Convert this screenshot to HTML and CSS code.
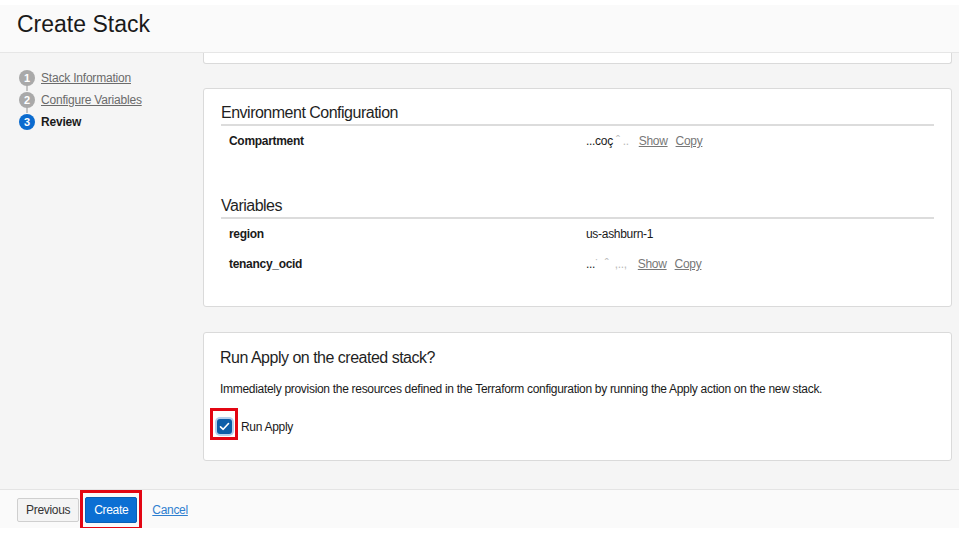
FILE: index.html
```html
<!DOCTYPE html>
<html>
<head>
<meta charset="utf-8">
<link rel="stylesheet" href="styles.css">
</head>
<body>
<div class="app">
  <header class="header"><h1 class="page-title">Create Stack</h1></header>
  <div class="body">
    <nav class="sidebar">
      <ol class="steps">
        <li class="step done"><span class="num">1</span><a class="step-link" href="#">Stack Information</a></li>
        <li class="step done"><span class="num">2</span><a class="step-link" href="#">Configure Variables</a></li>
        <li class="step current"><span class="num">3</span><span class="step-label">Review</span></li>
      </ol>
    </nav>
    <main class="main">
      <div class="card card-cut"></div>
      <section class="card env-card">
        <h2 class="card-title">Environment Configuration</h2>
        <div class="kv kv-compartment">
          <div class="k">Compartment</div>
          <div class="v"><span class="masked">...coç <span class="faint">ˆ ..</span></span><a class="act" href="#">Show</a><a class="act" href="#">Copy</a></div>
        </div>
        <h2 class="card-title">Variables</h2>
        <div class="kv">
          <div class="k">region</div>
          <div class="v">us-ashburn-1</div>
        </div>
        <div class="kv">
          <div class="k">tenancy_ocid</div>
          <div class="v"><span class="masked masked-wide">...<span class="faint">˙ &nbsp;ˆ &nbsp;,..,</span></span><a class="act" href="#">Show</a><a class="act" href="#">Copy</a></div>
        </div>
      </section>
      <section class="card apply-card">
        <h2 class="apply-title">Run Apply on the created stack?</h2>
        <p class="apply-desc">Immediately provision the resources defined in the Terraform configuration by running the Apply action on the new stack.</p>
        <label class="check-row">
          <span class="hl-box"><span class="checkbox"><svg width="11" height="9" viewBox="0 0 11 9"><path d="M1.5 4.8 L4.2 7.3 L9.5 1.5" fill="none" stroke="#fff" stroke-width="1.6" stroke-linecap="round" stroke-linejoin="round"/></svg></span></span>
          <span class="check-label">Run Apply</span>
        </label>
      </section>
    </main>
  </div>
  <footer class="footer">
    <button class="btn btn-default">Previous</button>
    <span class="hl-btn"><button class="btn btn-primary">Create</button></span>
    <a class="cancel" href="#">Cancel</a>
  </footer>
</div>
</body>
</html>
```
FILE: styles.css
```css
* { box-sizing: border-box; }
html, body { margin: 0; padding: 0; background: #fff; }
body { font-family: "Liberation Sans", Arial, sans-serif; color: #161513; }

.app {
  width: 959px;
  height: 523px;
  margin-top: 5px;
  display: flex;
  flex-direction: column;
  background: #f5f5f5;
}

.header {
  height: 48px;
  flex: none;
  background: #fafafa;
  border-bottom: 1px solid #e6e6e6;
  padding: 0 17px;
  display: flex;
  align-items: center;
}
.page-title {
  margin: 0 0 9px 0;
  font-size: 23px;
  font-weight: normal;
  color: #1a1a1a;
}

.body {
  flex: 1;
  display: flex;
  overflow: hidden;
}

.sidebar { width: 203px; flex: none; padding-top: 14px; }
.steps { list-style: none; margin: 0; padding: 0 0 0 19px; }
.step {
  position: relative;
  height: 22px;
  display: flex;
  align-items: center;
  font-size: 12px;
  letter-spacing: -0.2px;
}
.num {
  width: 16px; height: 16px;
  border-radius: 50%;
  background: #a9a9a9;
  color: #fff;
  font-size: 11px;
  font-weight: bold;
  letter-spacing: 0;
  display: flex; align-items: center; justify-content: center;
  margin-right: 6px;
  position: relative;
  z-index: 1;
}
.step.done::after {
  content: "";
  position: absolute;
  left: 7px; top: 14px;
  width: 2px; height: 10px;
  background: #c4c4c4;
}
.step.current .num { background: #0a6bcf; }
.step-link { color: #6b6b6b; text-decoration: underline; }
.step-label { font-weight: bold; color: #1a1a1a; }

.main { flex: 1; padding-right: 7px; }
.card {
  background: #fff;
  border: 1px solid #dadada;
  border-radius: 3px;
}
.card-cut {
  height: 11px;
  border-top: none;
  border-radius: 0 0 3px 3px;
  margin-bottom: 24px;
}

.env-card { height: 219px; padding: 14px 17px 0 17px; margin-bottom: 25px; }
.card-title {
  margin: 0;
  font-size: 16px;
  letter-spacing: -0.5px;
  font-weight: normal;
  line-height: 20px;
  padding-bottom: 1px;
  border-bottom: 2px solid #dcdcdc;
  color: #1f1f1f;
}
.kv {
  display: flex;
  align-items: center;
  height: 30px;
  font-size: 12px;
  letter-spacing: -0.3px;
  padding-left: 8px;
}
.kv-compartment { height: 30px; margin-bottom: 40px; }
.k { width: 357px; font-weight: bold; color: #1a1a1a; }
.v { color: #1a1a1a; display: flex; align-items: center; }
.masked { margin-right: 10px; }
.masked-wide { margin-right: 11px; }
.faint { color: #bbb; }
.act { color: #777; text-decoration: underline; margin-right: 8px; }

.apply-card { height: 129px; padding: 15px 17px 0 16px; }
.apply-title {
  margin: 0;
  font-size: 16px;
  letter-spacing: -0.5px;
  font-weight: normal;
  line-height: 20px;
  color: #1f1f1f;
}
.apply-desc { margin: 13px 0 0 0; font-size: 12px; letter-spacing: -0.3px; line-height: 16px; color: #1a1a1a; }
.check-row { display: flex; align-items: flex-end; margin-top: 11px; margin-left: -10px; font-size: 12px; letter-spacing: -0.3px; }
.hl-box {
  width: 28px; height: 32px;
  border: 3px solid #e30613;
  display: flex; align-items: flex-end; justify-content: center;
  padding-bottom: 3px;
}
.checkbox {
  width: 15px; height: 15px;
  border-radius: 3px;
  background: #0d5ea8;
  box-shadow: 0 0 0 2px #b5d1ee;
  display: flex; align-items: center; justify-content: center;
}
.check-label { margin-left: 3px; margin-bottom: 5px; line-height: 16px; color: #1a1a1a; }

.footer {
  height: 39px;
  flex: none;
  background: #fafafa;
  border-top: 1px solid #e4e4e4;
  display: flex;
  align-items: center;
  padding: 1px 0 0 17px;
}
.btn {
  font-family: "Liberation Sans", Arial, sans-serif;
  font-size: 12px;
  letter-spacing: -0.3px;
  height: 24px;
  border-radius: 2px;
  padding: 0 7px;
  cursor: pointer;
}
.btn-default { background: #f4f4f4; border: 1px solid #cfcfcf; color: #333; margin-right: 1px; padding: 0 8px; }
.hl-btn {
  border: 3px solid #e30613;
  padding: 4px 2px;
  display: flex;
}
.btn-primary { background: #0b6fd3; border: 1px solid #0a5fb4; color: #fff; height: 26px; width: 52px; padding: 0; }
.cancel { margin-left: 10px; font-size: 12px; letter-spacing: -0.3px; color: #2f7fd0; text-decoration: underline; }
```
